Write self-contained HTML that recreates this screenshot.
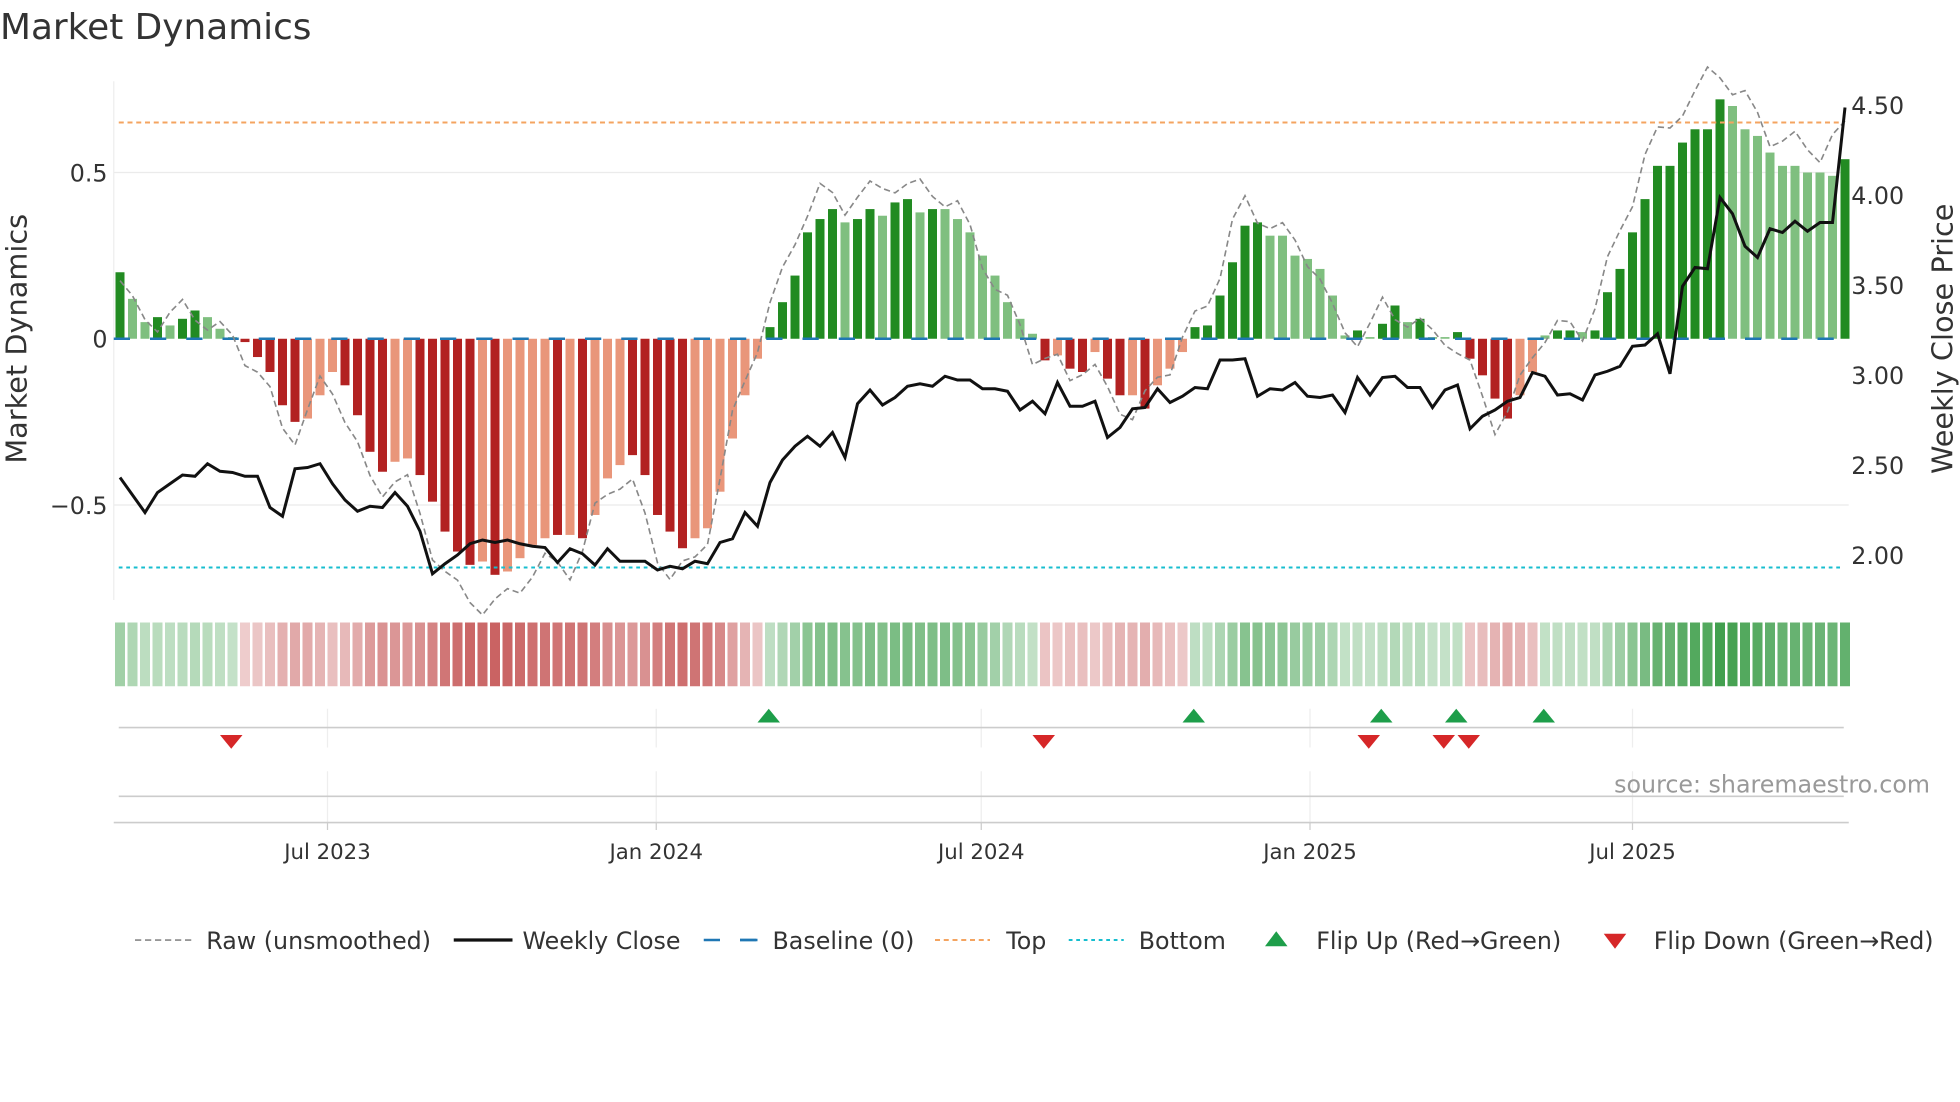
<!DOCTYPE html>
<html><head><meta charset="utf-8"><style>
html,body{margin:0;padding:0;background:#fff;width:1960px;height:1102px;overflow:hidden}
svg{display:block}
text{font-family:"DejaVu Sans","Liberation Sans",sans-serif;fill:#333}
</style></head><body>
<svg id="s" width="1960" height="1102" viewBox="0 0 1568 881.6" preserveAspectRatio="none" xmlns="http://www.w3.org/2000/svg">
<text x="0" y="31" font-size="28.7">Market Dynamics</text>
<line x1="91" y1="65" x2="91" y2="480" stroke="#eee" stroke-width="1"/>
<line x1="91" y1="138" x2="1479" y2="138" stroke="#ebebeb" stroke-width="1"/>
<line x1="91" y1="404" x2="1479" y2="404" stroke="#ebebeb" stroke-width="1"/>
<g font-size="19" text-anchor="end">
<text x="86" y="145">0.5</text><text x="86" y="278">0</text><text x="86" y="411">−0.5</text>
</g>
<g font-size="19">
<text x="1481" y="91">4.50</text><text x="1481" y="163">4.00</text><text x="1481" y="235">3.50</text>
<text x="1481" y="307">3.00</text><text x="1481" y="379">2.50</text><text x="1481" y="451">2.00</text>
</g>
<text font-size="23" text-anchor="middle" transform="translate(21,271) rotate(-90)">Market Dynamics</text>
<text font-size="23" text-anchor="middle" transform="translate(1562,271) rotate(-90)">Weekly Close Price</text>
<g id="bars"></g>
<line x1="91" y1="271" x2="1479" y2="271" stroke="#1f77b4" stroke-width="2" stroke-dasharray="13,16"/>
<line x1="95" y1="98" x2="1475" y2="98" stroke="#f4a460" stroke-width="1.6" stroke-dasharray="4,3"/>
<line x1="95" y1="454" x2="1475" y2="454" stroke="#17becf" stroke-width="1.6" stroke-dasharray="3,3"/>
<polyline id="raw" fill="none" stroke="#888" stroke-width="1.3" stroke-dasharray="5,3"/>
<polyline id="close" fill="none" stroke="#111" stroke-width="2.4"/>
<g id="heat"></g>
<g stroke="#eee" stroke-width="1">
<line x1="262" y1="567" x2="262" y2="598"/><line x1="525" y1="567" x2="525" y2="598"/><line x1="785" y1="567" x2="785" y2="598"/><line x1="1048" y1="567" x2="1048" y2="598"/><line x1="1306" y1="567" x2="1306" y2="598"/>
<line x1="262" y1="617" x2="262" y2="658"/><line x1="525" y1="617" x2="525" y2="658"/><line x1="785" y1="617" x2="785" y2="658"/><line x1="1048" y1="617" x2="1048" y2="658"/><line x1="1306" y1="617" x2="1306" y2="658"/>
</g>
<line x1="95" y1="582" x2="1475" y2="582" stroke="#ccc" stroke-width="1.3"/>
<line x1="95" y1="637" x2="1475" y2="637" stroke="#ccc" stroke-width="1.3"/>
<line x1="91" y1="658" x2="1479" y2="658" stroke="#ccc" stroke-width="1.3"/>
<g stroke="#ccc"><line x1="262" y1="658" x2="262" y2="664"/><line x1="525" y1="658" x2="525" y2="664"/><line x1="785" y1="658" x2="785" y2="664"/><line x1="1048" y1="658" x2="1048" y2="664"/><line x1="1306" y1="658" x2="1306" y2="664"/></g>
<g id="tri"></g>
<text x="1544" y="634" font-size="19" text-anchor="end" style="fill:#999">source: sharemaestro.com</text>
<g font-size="17" text-anchor="middle">
<text x="262" y="687">Jul 2023</text><text x="525" y="687">Jan 2024</text><text x="785" y="687">Jul 2024</text><text x="1048" y="687">Jan 2025</text><text x="1306" y="687">Jul 2025</text>
</g>
<g font-size="19">
<line x1="108" y1="752" x2="153" y2="752" stroke="#888" stroke-width="1.3" stroke-dasharray="5,3"/>
<text x="165" y="759">Raw (unsmoothed)</text>
<line x1="363" y1="752" x2="410" y2="752" stroke="#111" stroke-width="2.6"/>
<text x="418" y="759">Weekly Close</text>
<line x1="563" y1="752" x2="606" y2="752" stroke="#1f77b4" stroke-width="2" stroke-dasharray="13,16"/>
<line x1="592" y1="752" x2="606" y2="752" stroke="#1f77b4" stroke-width="2"/>
<text x="618" y="759">Baseline (0)</text>
<line x1="748" y1="752" x2="792" y2="752" stroke="#f4a460" stroke-width="1.6" stroke-dasharray="4,3"/>
<text x="805" y="759">Top</text>
<line x1="855" y1="752" x2="899" y2="752" stroke="#17becf" stroke-width="1.6" stroke-dasharray="3,3"/>
<text x="911" y="759">Bottom</text>
<polygon points="1012,757 1030,757 1021,745" fill="#1e9e4a"/>
<text x="1053" y="759">Flip Up (Red→Green)</text>
<polygon points="1283,747 1301,747 1292,759" fill="#d62728"/>
<text x="1323" y="759">Flip Down (Green→Red)</text>
</g>
</svg>
<script>
var V=[[.2,1],[.12,0],[.05,0],[.065,1],[.04,0],[.06,1],[.085,1],[.065,0],[.03,0],[.005,0],
[-.01,1],[-.055,1],[-.1,1],[-.2,1],[-.25,1],[-.24,0],[-.17,0],[-.1,0],[-.14,1],[-.23,1],
[-.34,1],[-.4,1],[-.37,0],[-.36,0],[-.41,1],[-.49,1],[-.58,1],[-.64,1],[-.68,1],[-.67,0],
[-.71,1],[-.7,0],[-.66,0],[-.62,0],[-.6,0],[-.59,1],[-.59,0],[-.6,1],[-.53,0],[-.42,0],
[-.38,0],[-.35,1],[-.41,1],[-.53,1],[-.58,1],[-.63,1],[-.6,0],[-.57,0],[-.46,0],[-.3,0],
[-.17,0],[-.06,0],[.035,1],[.11,1],[.19,1],[.32,1],[.36,1],[.39,1],[.35,0],[.36,1],
[.39,1],[.37,0],[.41,1],[.42,1],[.38,0],[.39,1],[.39,0],[.36,0],[.32,0],[.25,0],
[.19,0],[.11,0],[.06,0],[.015,0],[-.065,1],[-.05,0],[-.09,1],[-.1,1],[-.04,0],[-.12,1],
[-.17,1],[-.17,0],[-.21,1],[-.14,0],[-.09,0],[-.04,0],[.035,1],[.04,1],[.13,1],[.23,1],
[.34,1],[.35,1],[.31,0],[.31,0],[.25,0],[.24,0],[.21,0],[.13,0],[.01,0],[.025,1],
[.005,0],[.045,1],[.1,1],[.05,0],[.06,1],[.005,0],[.005,0],[.02,1],[-.06,1],[-.11,1],
[-.18,1],[-.24,1],[-.17,0],[-.1,0],[.01,0],[.025,1],[.025,1],[.02,0],[.025,1],[.14,1],
[.21,1],[.32,1],[.42,1],[.52,1],[.52,1],[.59,1],[.63,1],[.63,1],[.72,1],[.7,0],
[.63,0],[.61,0],[.56,0],[.52,0],[.52,0],[.5,0],[.5,0],[.49,0],[.54,1]];
var C=[382,396,410,394,387,380,381,371,377,378,381,381,406,413,375,374,371,387,400,409,405,406,394,405,425,459,451,444,435,432,434,432,435,437,438,450,439,443,452,439,449,449,449,456,453,455,449,451,434,431,410,421,386,368,357,349,357,346,366,323,312,324,318,309,307,309,301,304,304,311,311,313,328,321,331,306,325,325,321,350,342,327,326,311,322,317,310,311,288,288,287,317,311,312,306,317,318,316,330,302,316,302,301,310,310,326,312,308,343,333,328,321,318,298,301,316,315,320,300,297,293,277,276,267,299,229,214,215,158,171,197,206,183,186,177,185,178,178,86];
var ns="http://www.w3.org/2000/svg",b=document.getElementById('bars'),h=document.getElementById('heat');
function el(p,t,a){var e=document.createElementNS(ns,t);for(var k in a)e.setAttribute(k,a[k]);p.appendChild(e);return e;}
var rp=[],cp=[];
for(var i=0;i<V.length;i++){var v=V[i][0],d=V[i][1],x=96+10*i;
 var col=v>=0?(d?'#228b22':'#7fbf7f'):(d?'#b22222':'#e9967a');
 var hh=Math.abs(v)*266;if(hh<1)hh=1;
 el(b,'rect',{x:x-3.6,y:v>=0?271-hh:271,width:7.2,height:hh,fill:col});
 var a=0.28+0.62*Math.min(1,Math.abs(v)/0.72);
 var hc=v>=0?'rgba(46,150,60,'+a+')':'rgba(195,80,80,'+a+')';
 el(h,'rect',{x:x-5+1,y:498,width:8,height:51,fill:hc});
 var n=V[Math.min(V.length-1,i+1)][0];var r=(v*0.4+n*0.6)*1.15+0.04*Math.sin(i*1.7);
 rp.push(x+','+(271-r*266).toFixed(1));cp.push(x+','+C[i]);}
document.getElementById('raw').setAttribute('points',rp.join(' '));
document.getElementById('close').setAttribute('points',cp.join(' '));
var t=document.getElementById('tri');
[615,955,1105,1165,1235].forEach(function(x){el(t,'polygon',{points:(x-9)+',578 '+(x+9)+',578 '+x+',567',fill:'#1e9e4a'});});
[185,835,1095,1155,1175].forEach(function(x){el(t,'polygon',{points:(x-9)+',588 '+(x+9)+',588 '+x+',599',fill:'#d62728'});});
</script>
</body></html>
